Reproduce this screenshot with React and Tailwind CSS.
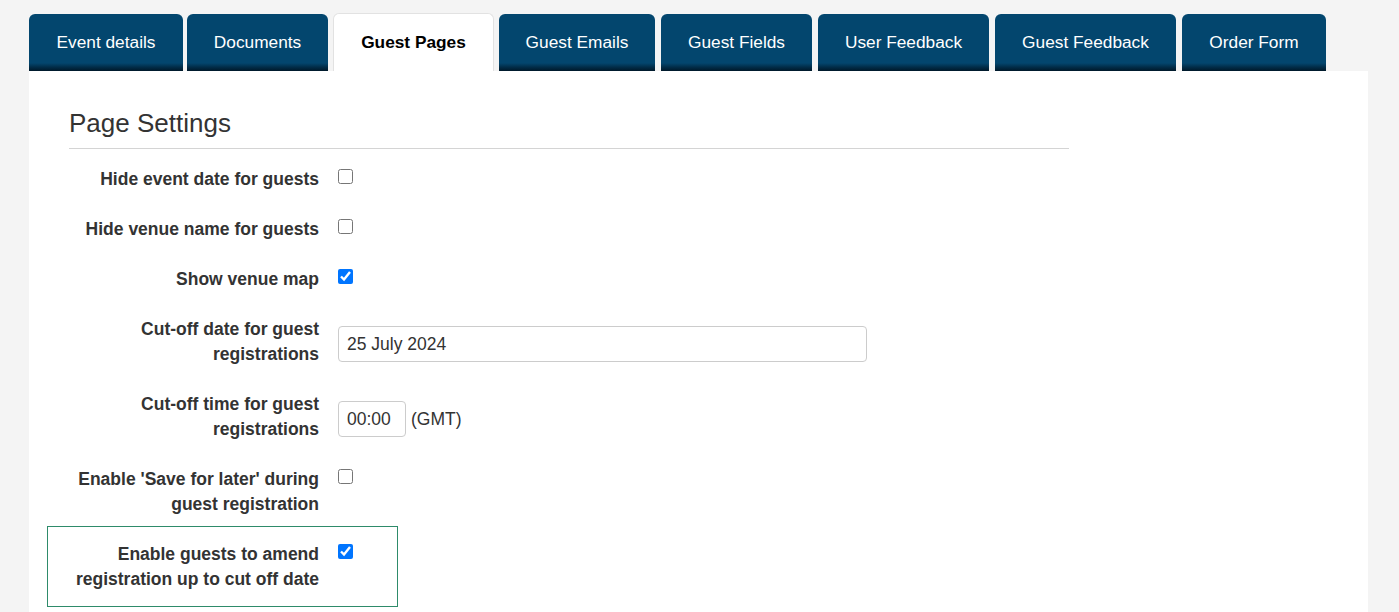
import React from "react";

const tabs = [
  { label: "Event details", w: 154, ml: 0 },
  { label: "Documents", w: 141, ml: 4 },
  { label: "Guest Pages", w: 161, ml: 5, active: true },
  { label: "Guest Emails", w: 156, ml: 5 },
  { label: "Guest Fields", w: 151, ml: 6 },
  { label: "User Feedback", w: 171, ml: 6 },
  { label: "Guest Feedback", w: 181, ml: 6 },
  { label: "Order Form", w: 144, ml: 6 },
];

function Tab({ label, w, ml, active }) {
  if (active) {
    return (
      <div
        style={{ width: w, marginLeft: ml }}
        className="h-[58px] rounded-t-[6px] border border-b-0 border-[#e2e2e2] bg-white flex items-center justify-center text-[17.3px] font-bold text-black"
      >
        {label}
      </div>
    );
  }
  return (
    <div
      style={{ width: w, marginLeft: ml }}
      className="h-[57px] rounded-t-[6px] bg-[linear-gradient(to_bottom,#03466e_0%,#03466e_86%,#012a44_94%,#00192a_100%)] flex items-center justify-center text-[17.3px] text-white"
    >
      {label}
    </div>
  );
}

function Label({ children }) {
  return (
    <div className="w-[250px] shrink-0 text-right text-[17.5px] font-bold leading-[25px] text-[#333]">
      {children}
    </div>
  );
}

function Check({ checked }) {
  return (
    <input
      type="checkbox"
      defaultChecked={checked}
      className="m-0 mt-[2px] h-[15px] w-[15px] accent-[#0075ff]"
    />
  );
}

function Row({ label, children }) {
  return (
    <div className="mb-[25px] flex items-start gap-[19px]">
      <Label>{label}</Label>
      <div className="flex items-start">{children}</div>
    </div>
  );
}

export default function App() {
  return (
    <div
      className="min-h-[612px] w-full bg-[#f4f4f4] pt-[13px] pl-[29px]"
      style={{ fontFamily: '"Liberation Sans", Arial, sans-serif' }}
    >
      <div className="flex items-end">
        {tabs.map((t) => (
          <Tab key={t.label} {...t} />
        ))}
      </div>
      <div className="w-[1339px] bg-white pl-[40px] pt-[37px] pb-[8px]">
        <h2 className="text-[26px] leading-[30px] font-normal text-[#333]">Page Settings</h2>
        <div className="mt-[10px] mb-[18px] h-px w-[1000px] bg-[#d4d4d4]" />
        <Row label="Hide event date for guests">
          <Check />
        </Row>
        <Row label="Hide venue name for guests">
          <Check />
        </Row>
        <Row label="Show venue map">
          <Check checked />
        </Row>
        <Row label={<>Cut-off date for guest<br />registrations</>}>
          <div className="mt-[9px] flex h-[36px] w-[529px] items-center rounded-[4px] border border-[#cccccc] px-[8px] text-[17.5px] text-[#333]">
            25 July 2024
          </div>
        </Row>
        <Row label={<>Cut-off time for guest<br />registrations</>}>
          <div className="mt-[9px] flex items-center gap-[5px]">
            <div className="flex h-[36px] w-[68px] items-center rounded-[4px] border border-[#cccccc] px-[8px] text-[17.5px] text-[#333]">
              00:00
            </div>
            <span className="text-[17.5px] text-[#333]">(GMT)</span>
          </div>
        </Row>
        <Row label={<>Enable 'Save for later' during<br />guest registration</>}>
          <Check />
        </Row>
        <div className="-ml-[22px] -mt-[16px] flex w-[351px] items-start gap-[19px] border border-[#2e8b6a] pt-[15px] pb-[14px] pl-[21px]">
          <Label>
            Enable guests to amend<br />registration up to cut off date
          </Label>
          <Check checked />
        </div>
      </div>
    </div>
  );
}
